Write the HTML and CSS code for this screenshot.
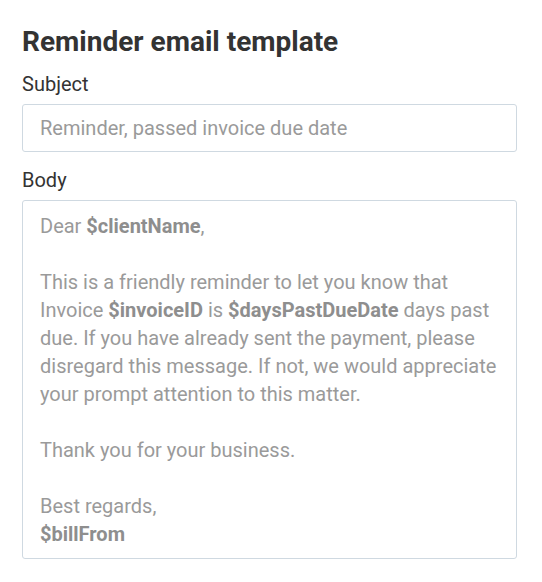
FILE: index.html
```html
<!DOCTYPE html>
<html>
<head>
<meta charset="utf-8">
<link rel="stylesheet" href="styles.css">
</head>
<body>
<div class="panel">
  <h2 class="title">Reminder email template</h2>
  <div class="field">
    <label class="label">Subject</label>
    <div class="input">Reminder, passed invoice due date</div>
  </div>
  <div class="field">
    <label class="label">Body</label>
    <div class="textarea">
      <div class="line">Dear <b>$clientName</b>,</div>
      <div class="line blank"></div>
      <div class="line">This is a friendly reminder to let you know that</div>
      <div class="line">Invoice <b>$invoiceID</b> is <b>$daysPastDueDate</b> days past</div>
      <div class="line">due. If you have already sent the payment, please</div>
      <div class="line">disregard this message. If not, we would appreciate</div>
      <div class="line">your prompt attention to this matter.</div>
      <div class="line blank"></div>
      <div class="line">Thank you for your business.</div>
      <div class="line blank"></div>
      <div class="line">Best regards,</div>
      <div class="line"><b>$billFrom</b></div>
    </div>
  </div>
</div>
</body>
</html>
```
FILE: styles.css
```css
html, body {
  margin: 0;
  padding: 0;
  background: #ffffff;
}
body {
  font-family: Roboto, "Liberation Sans", sans-serif;
}
.panel {
  padding: 24px 25px 0 22px;
  display: flex;
  flex-direction: column;
}
.title {
  margin: 0;
  font-size: 28px;
  line-height: 36px;
  font-weight: 700;
  color: #333333;
}
.field {
  display: flex;
  flex-direction: column;
  gap: 8px;
}
.title + .field {
  margin-top: 12px;
}
.field + .field {
  margin-top: 16px;
}
.label {
  font-size: 20px;
  line-height: 24px;
  color: #333333;
}
.input {
  height: 46px;
  border: 1px solid #cfd9e1;
  border-radius: 3px;
  padding: 0 18px 0 17px;
  display: flex;
  align-items: center;
  font-size: 20px;
  color: #9a9a9a;
}
.textarea {
  border: 1px solid #cfd9e1;
  border-radius: 3px;
  padding: 11px 18px 10px 17px;
  font-size: 20px;
  line-height: 28px;
  color: #9a9a9a;
}
.line {
  white-space: nowrap;
  height: 28px;
}
.textarea b {
  font-weight: 700;
  color: #8e8e8e;
}
```
